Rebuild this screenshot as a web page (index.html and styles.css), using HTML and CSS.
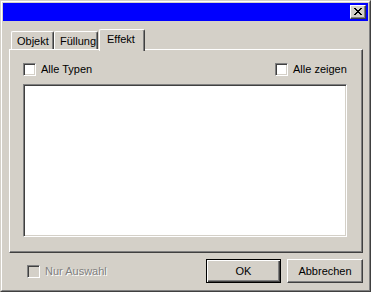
FILE: index.html
```html
<!DOCTYPE html>
<html>
  <head>
    <link rel="stylesheet" href="styles.css">
  </head>
  <body>
    <div class="window">
      <div class="window-inner">
        <div class="titlebar">
          <div class="close-btn">
            <svg width="8" height="7" viewBox="0 0 8 7" shape-rendering="crispEdges">
              <path fill="#000" d="M0 0h2v1h-2zM6 0h2v1h-2zM1 1h2v1h-2zM5 1h2v1h-2zM2 2h4v1h-4zM3 3h2v1h-2zM2 4h4v1h-4zM1 5h2v1h-2zM5 5h2v1h-2zM0 6h2v1h-2zM6 6h2v1h-2z"/>
            </svg>
          </div>
        </div>
        <div class="content">
          <div class="tabs">
            <div class="tab tab-objekt">Objekt</div>
            <div class="tab tab-fuellung">Füllung</div>
            <div class="tab tab-effekt selected">Effekt</div>
          </div>
          <div class="panel">
            <div class="panel-row">
              <label class="check">
                <span class="check-box"></span>
                <span class="check-label">Alle Typen</span>
              </label>
              <label class="check check-right">
                <span class="check-box"></span>
                <span class="check-label">Alle zeigen</span>
              </label>
            </div>
            <div class="list-box"></div>
          </div>
          <div class="footer">
            <label class="check disabled">
              <span class="check-box"></span>
              <span class="check-label">Nur Auswahl</span>
            </label>
            <div class="button default">OK</div>
            <div class="button cancel">Abbrechen</div>
          </div>
        </div>
      </div>
    </div>
  </body>
</html>
```

FILE: styles.css
```css
html {
  font-family: "Liberation Sans", Arial, sans-serif;
  font-size: 11px;
}

* {
  box-sizing: border-box;
}

body {
  margin: 0;
  background: #d4d0c8;
}

.window {
  width: 371px;
  height: 292px;
  border: 1px solid;
  border-color: #d4d0c8 #404040 #404040 #d4d0c8;
  background: #d4d0c8;
}

.window-inner {
  height: 100%;
  border: 1px solid;
  border-color: #fff #808080 #808080 #fff;
  padding: 1px;
}

.titlebar {
  height: 18px;
  background: #0000ff;
  display: flex;
  justify-content: flex-end;
  align-items: center;
  padding-right: 2px;
}

.close-btn {
  width: 16px;
  height: 14px;
  background: #d4d0c8;
  border: 1px solid;
  border-color: #fff #404040 #404040 #fff;
  box-shadow: inset -1px -1px #808080;
  display: flex;
  padding: 2px 0 0 3px;
}

.close-btn svg {
  display: block;
}

.content {
  padding: 8px 5px 0 6px;
}

/* tabs */

.tabs {
  display: flex;
  align-items: flex-end;
  padding-left: 2px;
}

.tab {
  height: 18px;
  border-left: 1px solid #fff;
  border-top: 1px solid #fff;
  border-right: 1px solid #404040;
  border-top-left-radius: 2px;
  border-top-right-radius: 2px;
  box-shadow: inset -1px 0 #808080;
  line-height: 18px;
  padding-left: 5px;
  background: #d4d0c8;
}

.tab-objekt {
  width: 43px;
}

.tab-fuellung {
  width: 44px;
}

.tab-effekt {
  width: 46px;
  margin-left: 1px;
}

.tab.selected {
  height: 22px;
  margin-bottom: -2px;
  padding-left: 7px;
  position: relative;
  z-index: 1;
}

.panel {
  height: 204px;
  width: 354px;
  border: 1px solid;
  border-color: #fff #404040 #404040 #fff;
  box-shadow: inset -1px -1px #808080;
  padding: 12px 12px 12px 12px;
  display: flex;
  flex-direction: column;
}

.panel-row {
  display: flex;
  justify-content: space-between;
  height: 13px;
  margin-top: 1px;
  margin-left: 1px;
}

.check {
  display: flex;
  align-items: center;
  gap: 5px;
  height: 13px;
}

.check-right {
  width: 75px;
}

.check-box {
  width: 13px;
  height: 13px;
  flex: none;
  background: #fff;
  border: 1px solid;
  border-color: #808080 #fff #fff #808080;
  box-shadow: inset 1px 1px #404040, inset -1px -1px #d4d0c8;
}

.check-label {
  line-height: 13px;
}

.list-box {
  margin-top: 8px;
  margin-left: 1px;
  width: 324px;
  height: 153px;
  background: #fff;
  border: 1px solid;
  border-color: #808080 #fff #fff #808080;
  box-shadow: inset 1px 1px #404040, inset -1px -1px #d4d0c8;
}

/* footer */

.footer {
  display: flex;
  align-items: center;
  margin-top: 6px;
  height: 24px;
}

.footer .check {
  margin-left: 18px;
  margin-right: auto;
}

.check.disabled .check-box {
  background: #d4d0c8;
}

.check.disabled .check-label {
  color: #808080;
  text-shadow: 1px 1px #fff;
}

.button {
  width: 75px;
  height: 24px;
  display: flex;
  align-items: center;
  justify-content: center;
  background: #d4d0c8;
}

.button.default {
  border: 1px solid #000;
  box-shadow: inset 1px 1px #fff, inset -1px -1px #404040, inset -2px -2px #808080;
}

.button.cancel {
  margin-left: 6px;
  width: 76px;
  border: 1px solid;
  border-color: #fff #404040 #404040 #fff;
  box-shadow: inset -1px -1px #808080;
}
```
